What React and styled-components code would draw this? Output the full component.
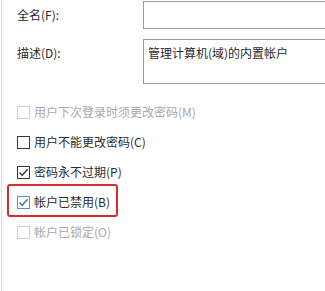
import React from "react";
import styled, { createGlobalStyle, css } from "styled-components";

const Global = createGlobalStyle`
  html, body { margin: 0; padding: 0; background: #fff; }
  body { font-family: "Noto Sans CJK SC", "Noto Sans", sans-serif; }
  * { box-sizing: border-box; }
`;

const Frame = styled.div`
  width: 324px;
  height: 291px;
  margin-left: 1px;
  border-left: 1px solid #dedede;
  overflow: hidden;
  padding: 1px 0 0 15px;
  font-size: 12px;
  color: #2b2b2b;
`;

const Fields = styled.div`
  display: grid;
  grid-template-columns: 126px 200px;
  row-gap: 10px;
`;

const Label = styled.div`
  line-height: 16px;
  align-self: ${(p) => (p.$top ? "start" : "center")};
  padding-top: ${(p) => (p.$top ? "6px" : "0")};
`;

const Input = styled.div`
  height: ${(p) => p.$h}px;
  border: 1px solid #9a9a9a;
  background: #fff;
  padding: 5px 4px;
  line-height: 16px;
  white-space: nowrap;
`;

const Checks = styled.div`
  margin-top: 13px;
  display: flex;
  flex-direction: column;
`;

const Row = styled.div`
  position: relative;
  height: 30px;
  display: flex;
  align-items: center;
  gap: 4px;
  color: ${(p) => (p.$disabled ? "#a8a8a8" : "#2b2b2b")};
  ${(p) =>
    p.$highlight &&
    css`
      &::after {
        content: "";
        position: absolute;
        left: -10px;
        top: -3px;
        width: 107px;
        bottom: 0;
        border: 2.5px solid #d2302c;
        border-radius: 3px;
      }
    `}
`;

const Box = styled.span`
  width: 13px;
  height: 13px;
  flex: none;
  border: 1px solid
    ${(p) => (p.$disabled ? "#cfcfcf" : p.$accent ? "#5a8fc8" : "#3a3a3a")};
  background: #fff;
  display: flex;
  align-items: center;
  justify-content: center;
`;

const Text = styled.span`
  line-height: 16px;
`;

function Check({ label, checked, disabled, accent, highlight }) {
  return (
    <Row $disabled={disabled} $highlight={highlight}>
      <Box $disabled={disabled} $accent={accent}>
        {checked && (
          <svg width="11" height="11" viewBox="0 0 11 11">
            <polyline
              points="1.5,5.5 4.2,8.2 9.6,2.2"
              fill="none"
              stroke={accent ? "#2d6db8" : "#333"}
              strokeWidth="1.3"
            />
          </svg>
        )}
      </Box>
      <Text>{label}</Text>
    </Row>
  );
}

export default function App() {
  return (
    <>
      <Global />
      <Frame>
        <Fields>
          <Label>全名(F):</Label>
          <Input $h={28} />
          <Label $top>描述(D):</Label>
          <Input $h={45}>管理计算机(域)的内置帐户</Input>
        </Fields>
        <Checks>
          <Check label="用户下次登录时须更改密码(M)" disabled />
          <Check label="用户不能更改密码(C)" />
          <Check label="密码永不过期(P)" checked />
          <Check label="帐户已禁用(B)" checked accent highlight />
          <Check label="帐户已锁定(O)" disabled />
        </Checks>
      </Frame>
    </>
  );
}
